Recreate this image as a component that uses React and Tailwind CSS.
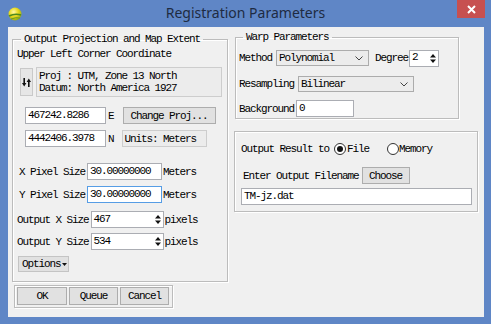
import React from "react";

const T = "font-['Liberation_Mono',monospace] text-[11px] tracking-[-1.1px] leading-[12px] text-black whitespace-nowrap";

function Spin() {
  return (
    <svg width="6" height="9" viewBox="0 0 6 9" className="shrink-0">
      <polygon points="3,0 6,3.6 0,3.6" fill="#111" />
      <polygon points="0,5.4 6,5.4 3,9" fill="#111" />
    </svg>
  );
}

function Chevron() {
  return (
    <svg width="8" height="5" viewBox="0 0 8 5" className="shrink-0">
      <polyline points="0.5,0.5 4,4 7.5,0.5" fill="none" stroke="#444" strokeWidth="1" />
    </svg>
  );
}

function Input({ className, children, focus, spin }) {
  return (
    <div
      className={`h-[17px] bg-white border ${focus ? "border-[#569de5]" : "border-[#abadb3]"} flex items-center pl-[2px] pr-[2px] shrink-0 ${className}`}
    >
      <span className={`${T} flex-1 -mt-[2px]`}>{children}</span>
      {spin && <Spin />}
    </div>
  );
}

function Select({ className, children }) {
  return (
    <div className={`h-[16px] bg-[#ececec] border border-[#acacac] flex items-center pl-[2px] pr-[5px] shrink-0 ${className}`}>
      <span className={`${T} flex-1`}>{children}</span>
      <Chevron />
    </div>
  );
}

function Btn({ className, children }) {
  return (
    <div className={`bg-[#e1e1e1] border border-[#adadad] flex items-center justify-center shrink-0 ${className}`}>
      <span className={T}>{children}</span>
    </div>
  );
}

function Radio({ checked }) {
  return (
    <div className="w-[12px] h-[12px] rounded-full border border-[#333] bg-white flex items-center justify-center shrink-0">
      {checked && <div className="w-[6px] h-[6px] rounded-full bg-[#111]" />}
    </div>
  );
}

const groupBorder = "border border-[#bcbcbc] shadow-[inset_1px_1px_0_#ffffff,1px_1px_0_#ffffff]";

export default function App() {
  return (
    <div className="w-[491px] h-[324px] bg-[#5f86c6] flex flex-col overflow-hidden">
      {/* Title bar */}
      <div className="h-[27px] grid grid-cols-[1fr_auto_1fr] shrink-0">
        <div className="flex items-start pl-[8px] pt-[7px]">
          <svg width="14" height="14" viewBox="0 0 14 14">
            <defs>
              <radialGradient id="g" cx="0.4" cy="0.35" r="0.7">
                <stop offset="0" stopColor="#fff9a8" />
                <stop offset="0.5" stopColor="#e8d81c" />
                <stop offset="1" stopColor="#8aa616" />
              </radialGradient>
            </defs>
            <circle cx="7" cy="7" r="6.5" fill="url(#g)" />
            <path d="M1 9 Q7 6 13 8" stroke="#4f8a1e" strokeWidth="1.6" fill="none" />
            <path d="M3 12 Q8 10 12 11" stroke="#6a9a22" strokeWidth="1" fill="none" />
          </svg>
        </div>
        <div className="flex items-center justify-center">
          <span className="font-['Noto_Sans',sans-serif] text-[14px] text-[#1e2b42] leading-none -mt-[1px]">
            Registration Parameters
          </span>
        </div>
        <div className="flex justify-end items-start pr-[6px]">
          <div className="w-[28px] h-[18px] bg-[#c75050] flex items-center justify-center">
            <svg width="9" height="9" viewBox="0 0 9 9">
              <path d="M1 1 L8 8 M8 1 L1 8" stroke="#fff" strokeWidth="2" />
            </svg>
          </div>
        </div>
      </div>

      {/* Body */}
      <div className="flex-1 ml-[8px] mr-[7px] mb-[7px] bg-[#f0f0f0] flex">
        {/* Left column */}
        <div className="ml-[4px] w-[216px] flex flex-col">
          <fieldset className={`mt-[6px] ${groupBorder} flex flex-col pb-[9px]`}>
            <legend className={`${T} ml-[8px] px-[3px]`}>Output Projection and Map Extent</legend>
            <div className={`${T} mt-[3px] ml-[4px]`}>Upper Left Corner Coordinate</div>

            <div className="mt-[7px] flex items-center h-[30px]">
              <div className="ml-[7px] w-[13px] h-[28px] bg-[#e6e6e6] border border-[#c9c9c9] flex items-center justify-center">
                <svg width="9" height="9" viewBox="0 0 9 9">
                  <path d="M2.2 0 V6" stroke="#111" strokeWidth="1.6" />
                  <polygon points="0,5 4.4,5 2.2,8.5" fill="#111" />
                  <path d="M6.8 9 V3" stroke="#111" strokeWidth="1.6" />
                  <polygon points="4.6,4 9,4 6.8,0.5" fill="#111" />
                </svg>
              </div>
              <div className="ml-[3px] w-[186px] h-[30px] bg-[#ececec] border border-[#cdcdcd] flex flex-col justify-center pl-[2px]">
                <div className={`${T} leading-[10px]`}>Proj : UTM, Zone 13 North</div>
                <div className={`${T} leading-[10px]`}>Datum: North America 1927</div>
              </div>
            </div>

            <div className="mt-[10px] flex items-center">
              <Input className="ml-[12px] w-[81px]">467242.8286</Input>
              <span className={`${T} ml-[2px]`}>E</span>
              <Btn className="ml-[9px] w-[93px] h-[17px]">Change Proj...</Btn>
            </div>
            <div className="mt-[6px] flex items-center">
              <Input className="ml-[12px] w-[81px]">4442406.3978</Input>
              <span className={`${T} ml-[2px]`}>N</span>
              <div className="ml-[8px] w-[85px] h-[17px] bg-[#ececec] border border-[#cdcdcd] flex items-center pl-[2px]">
                <span className={T}>Units: Meters</span>
              </div>
            </div>

            <div className="mt-[16px] flex items-center">
              <span className={`${T} ml-[6px]`}>X Pixel Size</span>
              <Input className="ml-[2px] w-[75px]">30.00000000</Input>
              <span className={`${T} ml-[1px]`}>Meters</span>
            </div>
            <div className="mt-[6px] flex items-center">
              <span className={`${T} ml-[6px]`}>Y Pixel Size</span>
              <Input className="ml-[2px] w-[75px]" focus>30.00000000</Input>
              <span className={`${T} ml-[1px]`}>Meters</span>
            </div>

            <div className="mt-[8px] flex items-center">
              <span className={`${T} ml-[4px]`}>Output X Size</span>
              <Input className="ml-[2px] w-[73px]" spin>467</Input>
              <span className={`${T} ml-[1px]`}>pixels</span>
            </div>
            <div className="mt-[5px] flex items-center">
              <span className={`${T} ml-[4px]`}>Output Y Size</span>
              <Input className="ml-[2px] w-[73px]" spin>534</Input>
              <span className={`${T} ml-[1px]`}>pixels</span>
            </div>

            <div className="mt-[6px] flex">
              <div className="ml-[5px] w-[51px] h-[16px] bg-[#e1e1e1] border border-[#c4c4c4] flex items-center pl-[3px]">
                <span className={T}>Options</span>
                <svg width="5" height="3" viewBox="0 0 5 3" className="ml-[1px]">
                  <polygon points="0,0 5,0 2.5,3" fill="#111" />
                </svg>
              </div>
            </div>
          </fieldset>

          <div className={`mt-[3px] ml-[2px] w-[159px] ${groupBorder} flex gap-[2px] pl-[2px] pt-[1px] pb-[2px]`}>
            <Btn className="w-[50px] h-[18px]">OK</Btn>
            <Btn className="w-[49px] h-[18px]">Queue</Btn>
            <Btn className="w-[49px] h-[18px]">Cancel</Btn>
          </div>
        </div>

        {/* Right column */}
        <div className="ml-[6px] w-[244px] flex flex-col">
          <fieldset className={`mt-[4px] ml-[1px] w-[224px] ${groupBorder} flex flex-col pb-[1px]`}>
            <legend className={`${T} ml-[7px] px-[3px]`}>Warp Parameters</legend>
            <div className="mt-[7px] flex items-center h-[16px]">
              <span className={`${T} ml-[3px]`}>Method</span>
              <Select className="ml-[4px] w-[93px]">Polynomial</Select>
              <span className={`${T} ml-[6px]`}>Degree</span>
              <Input className="ml-[1px] w-[30px] h-[16px]" spin>2</Input>
            </div>
            <div className="mt-[10px] flex items-center h-[16px]">
              <span className={`${T} ml-[3px]`}>Resampling</span>
              <Select className="ml-[4px] w-[116px]">Bilinear</Select>
            </div>
            <div className="mt-[8px] flex items-center">
              <span className={`${T} ml-[3px]`}>Background</span>
              <Input className="ml-[2px] w-[58px]">0</Input>
            </div>
          </fieldset>

          <div className={`mt-[12px] w-[244px] h-[81px] ${groupBorder} flex flex-col`}>
            <div className="mt-[11px] flex items-center">
              <span className={`${T} ml-[6px]`}>Output Result to</span>
              <div className="ml-[5px]"><Radio checked /></div>
              <span className={`${T} ml-[1px]`}>File</span>
              <div className="ml-[18px]"><Radio /></div>
              <span className={`${T} ml-[0px]`}>Memory</span>
            </div>
            <div className="mt-[12px] flex items-center">
              <span className={`${T} ml-[8px]`}>Enter Output Filename</span>
              <Btn className="ml-[3px] w-[48px] h-[17px]">Choose</Btn>
            </div>
            <Input className="mt-[4px] ml-[6px] w-[231px]">TM-jz.dat</Input>
          </div>
        </div>
      </div>
    </div>
  );
}
